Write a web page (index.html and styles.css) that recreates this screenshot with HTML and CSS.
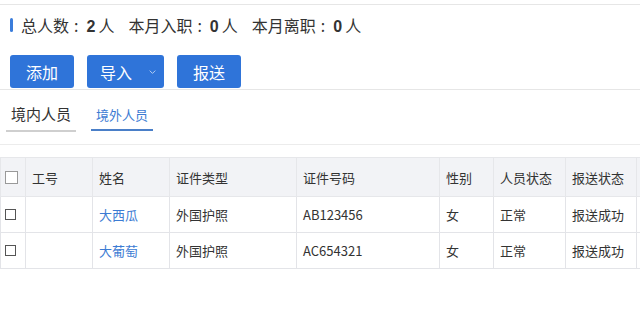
FILE: index.html
```html
<!DOCTYPE html>
<html lang="zh-CN">
<head>
    <meta charset="UTF-8">
    <title>人员信息</title>
    <link rel="stylesheet" href="styles.css">
</head>
<body>

<div class="page">
    <div class="summary">
        <span class="mark"></span>
        <span class="stat">总人数<i>:</i><b>2</b>人</span>
        <span class="stat">本月入职<i>:</i><b>0</b>人</span>
        <span class="stat">本月离职<i>:</i><b>0</b>人</span>
    </div>

    <div class="toolbar">
        <button class="btn">添加</button>
        <button class="btn btn-drop"><span>导入</span>
            <svg width="10" height="6" viewBox="0 0 10 6"><path d="M1 1l4 4 4-4" fill="none" stroke="#cfe0f7" stroke-width="1.2"/></svg>
        </button>
        <button class="btn">报送</button>
    </div>

    <div class="tabs">
        <div class="tab">境内人员</div>
        <div class="tab active">境外人员</div>
    </div>

    <div class="table-wrap">
        <table class="grid">
            <thead>
                <tr>
                    <th class="col-check"><span class="check big"></span></th>
                    <th class="col-no">工号</th>
                    <th class="col-name">姓名</th>
                    <th class="col-type">证件类型</th>
                    <th class="col-id">证件号码</th>
                    <th class="col-sex">性别</th>
                    <th class="col-state">人员状态</th>
                    <th class="col-send">报送状态</th>
                    <th class="col-more"></th>
                </tr>
            </thead>
            <tbody>
                <tr>
                    <td class="col-check"><span class="check"></span></td>
                    <td></td>
                    <td><a class="link">大西瓜</a></td>
                    <td>外国护照</td>
                    <td>AB123456</td>
                    <td>女</td>
                    <td>正常</td>
                    <td>报送成功</td>
                    <td></td>
                </tr>
                <tr>
                    <td class="col-check"><span class="check"></span></td>
                    <td></td>
                    <td><a class="link">大葡萄</a></td>
                    <td>外国护照</td>
                    <td>AC654321</td>
                    <td>女</td>
                    <td>正常</td>
                    <td>报送成功</td>
                    <td></td>
                </tr>
            </tbody>
        </table>
    </div>
</div>

</body>
</html>
```

FILE: styles.css
```css
body {
    margin: 0;
    background: #fff;
    color: #333;
    font-family: "Noto Sans CJK SC", "Noto Sans", sans-serif;
    overflow: hidden;
}

.page {
    border-top: 1px solid #e6e6e6;
    margin-top: 4px;
}

/* summary line */
.summary {
    display: flex;
    align-items: center;
    gap: 14px;
    height: 40px;
    padding: 0 0 0 10px;
    font-size: 16px;
}

.summary .mark {
    width: 3px;
    height: 14px;
    background: #3b7ddb;
    border-radius: 2px;
    margin-right: -6px;
}

.stat i {
    font-style: normal;
    margin: 0 8px 0 5px;
}

.stat b {
    font-family: "Liberation Sans", sans-serif;
    font-weight: bold;
    margin-right: 3px;
}

/* buttons */
.toolbar {
    display: flex;
    gap: 13px;
    padding: 10px 10px 0;
    height: 34px;
    border-bottom: 1px solid #e6e6e6;
}

.btn {
    height: 33px;
    padding: 0 16px;
    border: none;
    border-radius: 3px;
    background: #2f74d9;
    color: #fff;
    font-family: inherit;
    font-size: 16px;
    white-space: nowrap;
    cursor: pointer;
}

.btn-drop {
    display: flex;
    align-items: center;
    gap: 17px;
    padding: 0 8px 0 13px;
    width: 77px;
}

/* tabs */
.tabs {
    display: flex;
    gap: 15px;
    padding: 13px 0 0 6px;
    height: 41px;
    border-bottom: 1px solid #ececec;
}

.tab {
    height: 27px;
    padding: 0 5px;
    font-size: 15px;
    line-height: 22px;
    border-bottom: 2px solid #cfcfcf;
}

.tab.active {
    font-size: 13px;
    color: #3c7bd3;
    border-bottom-color: #4a7fc8;
    height: 26px;
    line-height: 24px;
}

/* table */
.table-wrap {
    padding-top: 12px;
    width: 640px;
    overflow: hidden;
}

.grid {
    border-collapse: collapse;
    font-size: 13px;
    width: 700px;
    table-layout: fixed;
}

.grid th,
.grid td {
    border: 1px solid #e3e4e8;
    text-align: left;
    padding: 0 0 0 6px;
    font-weight: normal;
    white-space: nowrap;
}

.grid th {
    background: #f2f3f6;
    height: 38px;
    border-color: #e6e7ea;
}

.grid td {
    height: 35px;
}

.grid .col-check {
    width: 20px;
    padding-left: 4px;
}
.col-no { width: 60px; }
.col-name { width: 70px; }
.col-type { width: 120px; }
.col-id { width: 136px; }
.col-sex { width: 47px; }
.col-state { width: 65px; }
.col-send { width: 64px; }
.col-more { width: 80px; }

.check {
    display: block;
    width: 9px;
    height: 9px;
    border: 1px solid #555;
    background: #fff;
}

.check.big {
    width: 11px;
    height: 11px;
    border-color: #999;
}

.link {
    color: #3c7bd3;
    text-decoration: none;
}
```
